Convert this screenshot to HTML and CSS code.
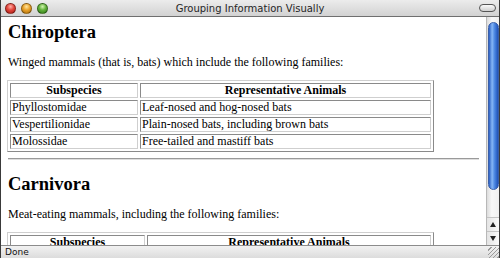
FILE: index.html
```html
<!DOCTYPE html>
<html>
<head>
<meta charset="utf-8">
<title>Grouping Information Visually</title>
<link rel="stylesheet" href="styles.css">
</head>
<body>
<div class="window">
  <div class="titlebar">
    <div class="lights"><span class="light red"></span><span class="light yellow"></span><span class="light green"></span></div>
    <div class="title">Grouping Information Visually</div>
    <div class="tools"><span class="toolbar-btn"></span></div>
  </div>
  <div class="viewport">
    <div class="page">
      <h1>Chiroptera</h1>
      <p>Winged mammals (that is, bats) which include the following families:</p>
      <table class="grid t1">
        <tr><th class="c1">Subspecies</th><th>Representative Animals</th></tr>
        <tr><td>Phyllostomidae</td><td>Leaf-nosed and hog-nosed bats</td></tr>
        <tr><td>Vespertilionidae</td><td>Plain-nosed bats, including brown bats</td></tr>
        <tr><td>Molossidae</td><td>Free-tailed and mastiff bats</td></tr>
      </table>
      <hr>
      <h1 class="second">Carnivora</h1>
      <p>Meat-eating mammals, including the following families:</p>
      <table class="grid t2">
        <tr><th class="c1">Subspecies</th><th>Representative Animals</th></tr>
        <tr><td>Felidae</td><td>Cats, including lions and tigers</td></tr>
        <tr><td>Canidae</td><td>Dogs, wolves and foxes</td></tr>
      </table>
    </div>
    <div class="scrollbar">
      <div class="track"><div class="thumb"></div></div>
      <div class="arrow up"><span class="tri-up"></span></div>
      <div class="arrow down"><span class="tri-down"></span></div>
    </div>
  </div>
  <div class="statusbar"><span class="status">Done</span><span class="grip"></span></div>
</div>
</body>
</html>
```
FILE: styles.css
```css
html, body {
  margin: 0;
  padding: 0;
  background: #ffffff;
}
.window {
  width: 500px;
  height: 258px;
  box-sizing: border-box;
  border-left: 1px solid #3a3a3a;
  border-right: 1px solid #3a3a3a;
  display: flex;
  flex-direction: column;
  overflow: hidden;
}
.titlebar {
  height: 16px;
  flex: none;
  border-bottom: 1px solid #6f6f6f;
  background: linear-gradient(#ececec, #d2d2d2);
  display: grid;
  grid-template-columns: 1fr auto 1fr;
  align-items: center;
}
.lights {
  display: flex;
  gap: 5px;
  padding-left: 4px;
}
.light {
  width: 11px;
  height: 11px;
  border-radius: 50%;
  box-sizing: border-box;
  border: 1px solid rgba(0,0,0,0.35);
}
.red { background: radial-gradient(circle at 50% 30%, #ffb0a8 0, #e2463c 45%, #a91a10 100%); }
.yellow { background: radial-gradient(circle at 50% 30%, #ffe6a0 0, #eaa22a 45%, #a66a08 100%); }
.green { background: radial-gradient(circle at 50% 30%, #d3f5b0 0, #63b23c 45%, #2f7a14 100%); }
.title {
  font-family: "DejaVu Sans", sans-serif;
  font-size: 10px;
  color: #262626;
  white-space: nowrap;
}
.tools {
  display: flex;
  justify-content: flex-end;
  padding-right: 3px;
}
.toolbar-btn {
  width: 15px;
  height: 6px;
  border: 1px solid #555;
  border-radius: 4px;
  background: linear-gradient(#fafafa, #cfcfcf);
}
.viewport {
  flex: 1;
  display: flex;
  min-height: 0;
}
.page {
  flex: 1;
  overflow: hidden;
  padding: 0 7px;
  font-family: "Liberation Serif", "Times New Roman", serif;
  font-size: 12px;
  color: #000;
}
h1 {
  font-size: 18.5px;
  font-weight: bold;
  margin: 4px 0 0;
  line-height: 22px;
}
p {
  margin: 12px 0 11px;
  line-height: 14px;
}
.grid {
  width: 427px;
  border-collapse: separate;
  border-spacing: 2px;
  border: 1px solid;
  border-color: #cfcfcf #8a8a8a #8a8a8a #cfcfcf;
  margin-left: -1px;
  font-size: 12px;
}
.grid th, .grid td {
  border: 1px solid;
  border-color: #8a8a8a #cfcfcf #cfcfcf #8a8a8a;
  padding: 0 1px;
  line-height: 13px;
  text-align: left;
}
.grid th { text-align: center; }
.t1 .c1 { width: 124px; }
.t2 .c1 { width: 131px; }
hr {
  margin: 6px 0 13px;
  border: 0;
  border-top: 1px solid #9a9a9a;
  border-bottom: 1px solid #dedede;
  height: 0;
}
.second { margin-top: 0; }
.scrollbar {
  width: 12px;
  flex: none;
  display: flex;
  flex-direction: column;
  background: linear-gradient(90deg, #dcdcdc, #f8f8f8 40%, #f0f0f0);
  border-left: 1px solid #b8b8b8;
}
.track {
  flex: 1;
  padding: 5px 0 27px 1px;
  display: flex;
}
.thumb {
  flex: 1;
  border-radius: 6px;
  background: linear-gradient(90deg, #2a5fc4, #86b6f5 35%, #4f8ae4 60%, #1f52b8);
  border: 1px solid #3a5fa8;
}
.arrow {
  height: 13px;
  flex: none;
  display: flex;
  align-items: center;
  justify-content: center;
  border-top: 1px solid #c4c4c4;
  background: linear-gradient(90deg, #e4e4e4, #fafafa);
}
.tri-up {
  width: 0; height: 0;
  border-left: 3px solid transparent;
  border-right: 3px solid transparent;
  border-bottom: 5px solid #222;
}
.tri-down {
  width: 0; height: 0;
  border-left: 3px solid transparent;
  border-right: 3px solid transparent;
  border-top: 5px solid #222;
}
.statusbar {
  height: 12px;
  flex: none;
  border-top: 1px solid #8c8c8c;
  background: linear-gradient(#f2f2f2, #dcdcdc);
  display: flex;
  justify-content: space-between;
  align-items: center;
  font-family: "DejaVu Sans", sans-serif;
  font-size: 9px;
  line-height: 12px;
  color: #111;
  padding-left: 4px;
}
.grip {
  width: 11px;
  height: 11px;
  align-self: flex-end;
  background: repeating-linear-gradient(135deg, transparent 0 2px, #9a9a9a 2px 3px);
}
```
